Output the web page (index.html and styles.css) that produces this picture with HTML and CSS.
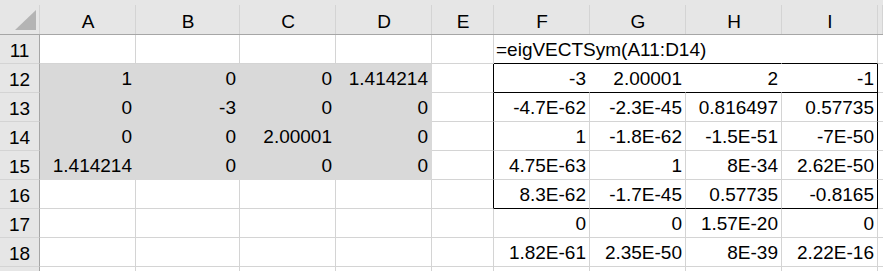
FILE: index.html
```html
<!DOCTYPE html>
<html lang="en">
<head>
    <meta charset="UTF-8">
    <meta name="viewport" content="width=device-width, initial-scale=1.0">
    <title>eigVECTSym</title>
    <link rel="stylesheet" href="styles.css">
</head>
<body>

    <div class="sheet">
        <!-- kolomkoppen -->
        <div class="row head">
            <div class="cell ch corner">
                <svg width="40" height="34" viewBox="0 0 40 34"><polygon points="36,10 36,30 15,30" fill="#b4b4b4"/></svg>
            </div>
            <div class="cell ch">A</div>
            <div class="cell ch">B</div>
            <div class="cell ch">C</div>
            <div class="cell ch">D</div>
            <div class="cell ch">E</div>
            <div class="cell ch">F</div>
            <div class="cell ch">G</div>
            <div class="cell ch">H</div>
            <div class="cell ch">I</div>
            <div class="cell ch"></div>
        </div>

        <div class="row">
            <div class="cell rh">11</div>
            <div class="cell"></div>
            <div class="cell"></div>
            <div class="cell"></div>
            <div class="cell"></div>
            <div class="cell"></div>
            <div class="cell txt span3 b-bot">=eigVECTSym(A11:D14)</div>
            <div class="cell b-bot"></div>
            <div class="cell"></div>
        </div>

        <div class="row">
            <div class="cell rh">12</div>
            <div class="cell fill">1</div>
            <div class="cell fill">0</div>
            <div class="cell fill">0</div>
            <div class="cell fill">1.414214</div>
            <div class="cell b-right"></div>
            <div class="cell plain b-bot">-3</div>
            <div class="cell plain b-bot">2.00001</div>
            <div class="cell plain b-bot">2</div>
            <div class="cell b-bot b-right">-1</div>
            <div class="cell"></div>
        </div>

        <div class="row">
            <div class="cell rh">13</div>
            <div class="cell fill">0</div>
            <div class="cell fill">-3</div>
            <div class="cell fill">0</div>
            <div class="cell fill">0</div>
            <div class="cell b-right"></div>
            <div class="cell">-4.7E-62</div>
            <div class="cell">-2.3E-45</div>
            <div class="cell">0.816497</div>
            <div class="cell b-right">0.57735</div>
            <div class="cell"></div>
        </div>

        <div class="row">
            <div class="cell rh">14</div>
            <div class="cell fill">0</div>
            <div class="cell fill">0</div>
            <div class="cell fill">2.00001</div>
            <div class="cell fill">0</div>
            <div class="cell b-right"></div>
            <div class="cell">1</div>
            <div class="cell">-1.8E-62</div>
            <div class="cell">-1.5E-51</div>
            <div class="cell b-right">-7E-50</div>
            <div class="cell"></div>
        </div>

        <div class="row">
            <div class="cell rh">15</div>
            <div class="cell fill">1.414214</div>
            <div class="cell fill">0</div>
            <div class="cell fill">0</div>
            <div class="cell fill">0</div>
            <div class="cell b-right"></div>
            <div class="cell">4.75E-63</div>
            <div class="cell">1</div>
            <div class="cell">8E-34</div>
            <div class="cell b-right">2.62E-50</div>
            <div class="cell"></div>
        </div>

        <div class="row">
            <div class="cell rh">16</div>
            <div class="cell"></div>
            <div class="cell"></div>
            <div class="cell"></div>
            <div class="cell"></div>
            <div class="cell b-right"></div>
            <div class="cell b-bot">8.3E-62</div>
            <div class="cell b-bot">-1.7E-45</div>
            <div class="cell b-bot">0.57735</div>
            <div class="cell b-bot b-right">-0.8165</div>
            <div class="cell"></div>
        </div>

        <div class="row">
            <div class="cell rh">17</div>
            <div class="cell"></div>
            <div class="cell"></div>
            <div class="cell"></div>
            <div class="cell"></div>
            <div class="cell"></div>
            <div class="cell">0</div>
            <div class="cell">0</div>
            <div class="cell">1.57E-20</div>
            <div class="cell">0</div>
            <div class="cell"></div>
        </div>

        <div class="row">
            <div class="cell rh">18</div>
            <div class="cell"></div>
            <div class="cell"></div>
            <div class="cell"></div>
            <div class="cell"></div>
            <div class="cell"></div>
            <div class="cell">1.82E-61</div>
            <div class="cell">2.35E-50</div>
            <div class="cell">8E-39</div>
            <div class="cell">2.22E-16</div>
            <div class="cell"></div>
        </div>

        <!-- volgende rij, valt net buiten beeld -->
        <div class="row">
            <div class="cell rh"></div>
            <div class="cell"></div>
            <div class="cell"></div>
            <div class="cell"></div>
            <div class="cell"></div>
            <div class="cell"></div>
            <div class="cell"></div>
            <div class="cell"></div>
            <div class="cell"></div>
            <div class="cell"></div>
            <div class="cell"></div>
        </div>
    </div>

</body>
</html>
```

FILE: styles.css
```css
body {
    margin: 0;
    background-color: #fff;
    font-family: "Liberation Sans", Arial, sans-serif;
    font-size: 19px;
    color: #000;
    overflow: hidden;
}

.sheet {
    width: 883px;
}

.row {
    display: grid;
    grid-template-columns: 40px 96px 104px 96px 96px 62px 96px 96px 96px 96px 1fr;
    height: 29px;
}

.row.head {
    height: 35px;
}

.cell {
    box-sizing: border-box;
    display: flex;
    align-items: flex-end;
    justify-content: flex-end;
    padding: 0 3px 4px 2px;
    line-height: 19px;
    white-space: nowrap;
    border-right: 1px solid #d4d4d4;
    border-bottom: 1px solid #d4d4d4;
    background-color: #fff;
}

/* kop van kolommen en rijen */
.ch {
    justify-content: center;
    padding: 0 0 3px 0;
    border-right: none;
    border-bottom-color: #a6a6a6;
    background: #e6e6e6 linear-gradient(#d4d4d4, #d4d4d4) no-repeat right bottom / 1px 29px;
}

.corner {
    padding: 0;
    align-items: stretch;
}

.corner svg {
    display: block;
}

.rh {
    justify-content: center;
    padding: 0 0 3px 0;
    background-color: #e6e6e6;
    border-right-color: #a6a6a6;
}

.txt {
    justify-content: flex-start;
}

.span3 {
    grid-column: span 3;
    border-right-color: #fff;
}

/* grijze invoermatrix */
.fill {
    background-color: #d9d9d9;
    border-color: #d9d9d9;
}

/* witte kopregel zonder rasterlijnen */
.plain {
    border-right-color: #fff;
}

.b-bot {
    border-bottom-color: #000;
}

.b-right {
    border-right-color: #000;
}
```
